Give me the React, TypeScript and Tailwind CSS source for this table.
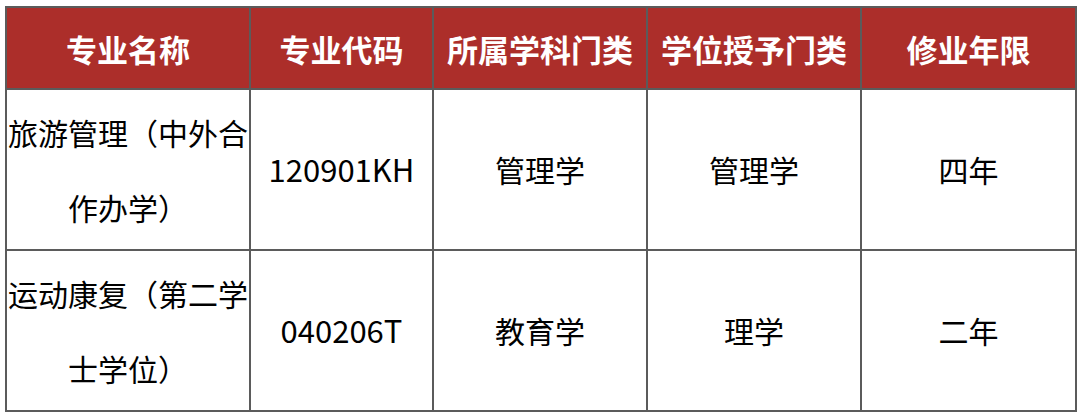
import React from 'react';

const headers = ['专业名称', '专业代码', '所属学科门类', '学位授予门类', '修业年限'];

const rows = [
  { name: ['旅游管理（中外合', '作办学）'], code: '120901KH', field: '管理学', degree: '管理学', years: '四年' },
  { name: ['运动康复（第二学', '士学位）'], code: '040206T', field: '教育学', degree: '理学', years: '二年' },
];

const cell = 'border-2 border-[#5b5b5b] text-center align-middle p-0';

export default function App() {
  return (
    <div className="w-[1080px] h-[415px] bg-white pt-[6px] pl-[5px] font-['Noto_Sans_CJK_SC','Noto_Sans',sans-serif]">
      <table className="border-collapse table-fixed w-[1070px]">
        <colgroup>
          <col className="w-[244px]" />
          <col className="w-[183px]" />
          <col className="w-[214px]" />
          <col className="w-[214px]" />
          <col className="w-[215px]" />
        </colgroup>
        <thead>
          <tr className="h-[82px]">
            {headers.map(h => (
              <th key={h} className={`${cell} bg-[#ac2e2a] text-white font-bold text-[31px] leading-none`}>
                {h}
              </th>
            ))}
          </tr>
        </thead>
        <tbody className="text-black text-[30px]">
          {rows.map(r => (
            <tr key={r.code} className="h-[161px]">
              <td className={`${cell} leading-[75px] whitespace-nowrap`}>
                {r.name[0]}
                <br />
                {r.name[1]}
              </td>
              <td className={`${cell} text-[31px]`}>{r.code}</td>
              <td className={cell}>{r.field}</td>
              <td className={cell}>{r.degree}</td>
              <td className={cell}>{r.years}</td>
            </tr>
          ))}
        </tbody>
      </table>
    </div>
  );
}
